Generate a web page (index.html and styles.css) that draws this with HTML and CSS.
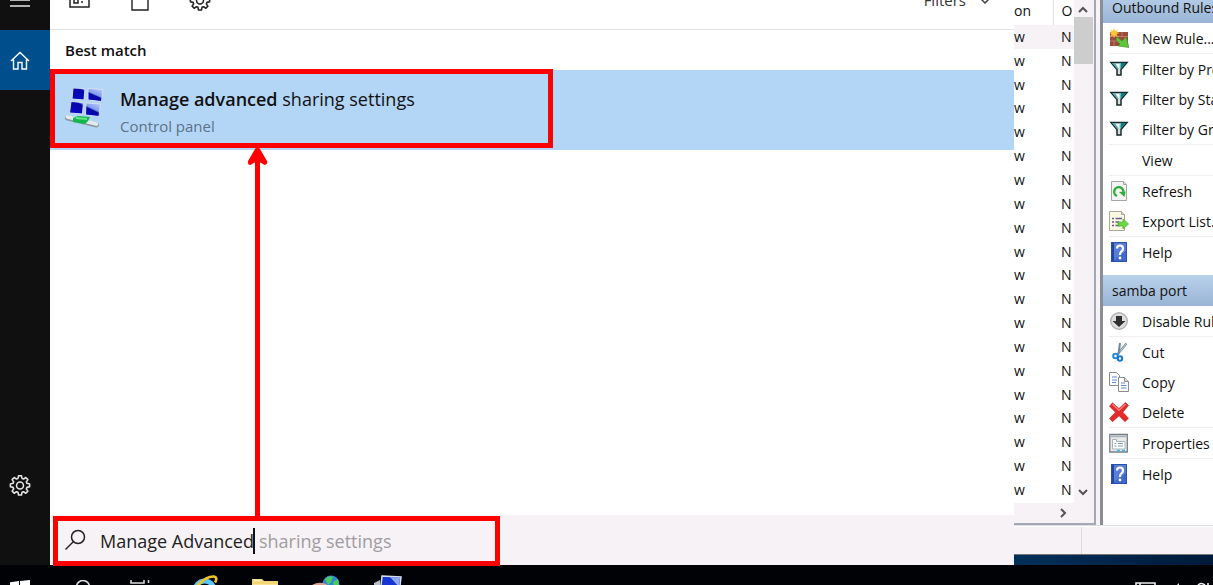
FILE: index.html
```html
<!DOCTYPE html>
<html lang="en">
<head>
<meta charset="utf-8">
<title>Search</title>
<link rel="stylesheet" href="styles.css">
</head>
<body>
<svg class="defs" aria-hidden="true">
  <defs>
    <linearGradient id="scr" x1="0" y1="1" x2="1" y2="0"><stop offset="0" stop-color="#0a0ac8"/><stop offset=".58" stop-color="#0508a8"/><stop offset=".64" stop-color="#7f9cf0"/><stop offset="1" stop-color="#c9d6fa"/></linearGradient>
    <symbol id="gear" viewBox="0 0 24 24"><path fill="none" stroke="currentColor" stroke-width="1.7" stroke-linejoin="round" d="M10.4 1.9h3.2l.6 2.9 1.6.7 2.5-1.7 2.3 2.3-1.7 2.5.7 1.6 2.9.6v3.2l-2.9.6-.7 1.6 1.7 2.5-2.3 2.3-2.5-1.7-1.6.7-.6 2.9h-3.2l-.6-2.9-1.6-.7-2.5 1.7-2.3-2.3 1.7-2.5-.7-1.6-2.9-.6v-3.2l2.9-.6.7-1.6-1.7-2.5 2.3-2.3 2.500 1.700 1.600-.7z"/><circle cx="12" cy="12.500" r="3.800" fill="none" stroke="currentColor" stroke-width="1.7"/></symbol>
    <symbol id="funnel" viewBox="0 0 20 20"><path d="M2 3.500h16l-6 7V16H8v-5.500z" fill="#d4dcdc" stroke="#16282c" stroke-width="1.500"/><path d="M12 4h5l-5.500 6V6z" fill="#008080"/><path d="M3 4h3l3.500 6H8z" fill="#4fa9ad"/><path d="M7 5h3v4z" fill="#fff"/></symbol>
    <symbol id="help" viewBox="0 0 20 20"><rect x="2" y="0" width="16" height="20" fill="#3f67cf"/><path d="M2 0h3v20H2z" fill="#2446a0"/><path d="M5 0h13v8L5 18z" fill="#6f8fe3" opacity=".55"/><path d="M2.500.5h15v19h-15z" fill="none" stroke="#2d4fae"/><path d="M8 6.500q0-3 3-3t3 3q0 1.800-1.700 3Q11 10.500 11 13" fill="none" stroke="#fff" stroke-width="2.200"/><circle cx="11" cy="16" r="1.400" fill="#fff"/></symbol>
  </defs>
</svg>

<div class="desktop">
  <nav class="rail">
    <button class="rail-btn" aria-label="Menu"><svg width="20" height="14" viewBox="0 0 20 14"><path d="M0 1h20M0 7h20M0 13h20" stroke="#e8e8e8" stroke-width="1.500"/></svg></button>
    <button class="rail-btn active" aria-label="Home"><svg width="20" height="20" viewBox="0 0 20 20"><path d="M1 11 10 2.500 19 11M3.500 9.500V19H8v-6.500h4V19h4.500V9.500" fill="none" stroke="#fff" stroke-width="1.400"/></svg></button>
    <button class="rail-btn last" aria-label="Settings"><svg width="22" height="22"><use href="#gear"/></svg></button>
  </nav>

  <main class="search">
    <header class="scopes">
      <button class="scope" aria-label="Apps"><svg width="22" height="18" viewBox="0 0 22 18"><path d="M1 1h19v15H1zM5 1v11h4V1M12 8h5M12 11h2" fill="none" stroke="#222" stroke-width="1.500"/></svg></button>
      <button class="scope" aria-label="Documents"><svg width="18" height="22" viewBox="0 0 18 22"><path d="M1 1h16v20H1z" fill="none" stroke="#222" stroke-width="1.400"/></svg></button>
      <button class="scope" aria-label="Settings"><svg width="22" height="22"><use href="#gear"/></svg></button>
      <button class="filters">Filters <svg width="14" height="8" viewBox="0 0 14 8"><path d="m1 1 6 6 6-6" fill="none" stroke="#444" stroke-width="1.500"/></svg></button>
    </header>
    <section class="results">
      <h2 class="group">Best match</h2>
      <button class="result">
        <svg width="40" height="42" viewBox="0 0 40 42">
          <g fill="url(#scr)" stroke="#d5ddf2" stroke-width="1"><path d="m8 0 12 .5-1 11.500-12-1zM23 .5l15 1-1.500 12-13.500-1.500z"/><path d="m6 13.500 12.500 1-1 11.500-13-1zM21 15l14.500 1-1.500 12.500-13.500-1.500z"/></g>
          <path d="m2.500 30 29 7" stroke="#8d9ba5" stroke-width="5" stroke-linecap="round"/><path d="m2.500 29 29 7" stroke="#e4ebee" stroke-width="3.500" stroke-linecap="round"/>
          <path d="m8 30 5-2 12 1-2 4-3 3-12-2z" fill="#12b84a"/><path d="m11 30 11 1" stroke="#69e58d" stroke-width="2"/>
        </svg>
        <span class="result-text">
          <span class="result-title"><b>Manage advanced</b> sharing settings</span>
          <span class="result-kind">Control panel</span>
        </span>
      </button>
    </section>
    <form class="query">
      <label for="q" class="query-icon" aria-label="Search"><svg width="22" height="22" viewBox="0 0 22 22"><circle cx="13" cy="8" r="6.500" fill="none" stroke="#222" stroke-width="1.500"/><path d="M8.500 12.500.5 20.500" stroke="#222" stroke-width="1.500"/></svg></label>
      <input id="q" class="query-input" type="text" value="Manage Advanced" autocomplete="off">
      <span class="query-hint">sharing settings</span>
    </form>
  </main>

  <aside class="console">
    <div class="panes">
      <div class="list-pane">
        <div class="list-row">
          <table class="rules">
            <thead><tr><th>on</th><th>O</th></tr></thead>
            <tbody>
              <tr class="hot"><td>w</td><td>N</td></tr>
              <tr><td>w</td><td>N</td></tr>
              <tr><td>w</td><td>N</td></tr>
              <tr><td>w</td><td>N</td></tr>
              <tr><td>w</td><td>N</td></tr>
              <tr><td>w</td><td>N</td></tr>
              <tr><td>w</td><td>N</td></tr>
              <tr><td>w</td><td>N</td></tr>
              <tr><td>w</td><td>N</td></tr>
              <tr><td>w</td><td>N</td></tr>
              <tr><td>w</td><td>N</td></tr>
              <tr><td>w</td><td>N</td></tr>
              <tr><td>w</td><td>N</td></tr>
              <tr><td>w</td><td>N</td></tr>
              <tr><td>w</td><td>N</td></tr>
              <tr><td>w</td><td>N</td></tr>
              <tr><td>w</td><td>N</td></tr>
              <tr><td>w</td><td>N</td></tr>
              <tr><td>w</td><td>N</td></tr>
              <tr><td>w</td><td>N</td></tr>
            </tbody>
          </table>
          <div class="vscroll">
            <button class="sb" aria-label="Scroll up"><svg width="10" height="8" viewBox="0 0 10 8"><path d="m1 6 4-4 4 4" fill="none" stroke="#555" stroke-width="2"/></svg></button>
            <div class="thumb"></div>
            <button class="sb end" aria-label="Scroll down"><svg width="10" height="8" viewBox="0 0 10 8"><path d="m1 2 4 4 4-4" fill="none" stroke="#555" stroke-width="2"/></svg></button>
          </div>
        </div>
        <div class="hscroll"><button class="sb" aria-label="Scroll right"><svg width="8" height="10" viewBox="0 0 8 10"><path d="m2 1 4 4-4 4" fill="none" stroke="#555" stroke-width="2"/></svg></button></div>
      </div>
      <div class="actions">
        <h3 class="actions-head">Outbound Rules</h3>
        <ul class="actions-list">
          <li class="sep"><button class="action"><svg width="20" height="20" viewBox="0 0 20 20"><path d="M1 4h18v14H1z" fill="#9c4a3c"/><path d="M1 8.500h18M1 13h18M6 4v4.500M13 4v4.500M9 8.500V13M16 8.500V13M5 13v5M12 13v5" stroke="#c08672" stroke-width=".8"/><path d="m8 9 5 4 4-4 3 10.500L9 18l2-2-4-4z" fill="#5fc63c" stroke="#3b8d22" stroke-width=".6"/><path d="m5 0 1 3 3-1.500L7.500 4l3 1-3 1L9 9 6 7.500 5 10 4 7.500 1 9l1.500-3L0 5l2.500-1L1 1.500 4 3z" fill="#f9c33a"/></svg>New Rule...</button></li>
          <li><button class="action"><svg width="20" height="20"><use href="#funnel"/></svg>Filter by Profile</button></li>
          <li><button class="action"><svg width="20" height="20"><use href="#funnel"/></svg>Filter by State</button></li>
          <li class="sep"><button class="action"><svg width="20" height="20"><use href="#funnel"/></svg>Filter by Group</button></li>
          <li class="sep"><button class="action"><span class="blank"></span>View</button></li>
          <li><button class="action"><svg width="20" height="20" viewBox="0 0 20 20"><path d="M2.500.5h12l3 3v16h-15z" fill="#f4f4f2" stroke="#a5a5a0"/><path d="M14.500.5v3h3" fill="#ddd" stroke="#a5a5a0"/><path d="M8 15A4.600 4.600 0 1 1 14.300 11.500" fill="none" stroke="#2fae3e" stroke-width="2.400"/><path d="m10 11 6.500-.5-1 5.500z" fill="#2fae3e"/></svg>Refresh</button></li>
          <li class="sep"><button class="action"><svg width="20" height="20" viewBox="0 0 20 20"><path d="M.5.5h12l3 3v16H.5z" fill="#fbf8e4" stroke="#aaa795"/><path d="M12.500.5v3h3" fill="#ddd" stroke="#aaa795"/><path d="M3 7.500h2M3 11h2M3 14.500h2M6.500 7.500H13M6.500 11H10M6.500 14.500H11" stroke="#665f86" stroke-width="1.300"/><path d="M9 11h5V8l5.500 5-5.500 5v-3H9z" fill="#6ad840" stroke="#4bab2c" stroke-width=".7"/></svg>Export List...</button></li>
          <li><button class="action"><svg width="20" height="20"><use href="#help"/></svg>Help</button></li>
        </ul>
        <h3 class="actions-head">samba port</h3>
        <ul class="actions-list">
          <li class="sep"><button class="action"><svg width="20" height="20" viewBox="0 0 20 20"><circle cx="10" cy="10" r="8.300" fill="#dedede" stroke="#b4b4b4" stroke-width="1.400"/><path d="M7 5h6v5h3.500L10 16 3.500 10H7z" fill="#303030"/></svg>Disable Rule</button></li>
          <li><button class="action"><svg width="20" height="20" viewBox="0 0 20 20"><path d="M11 1 9.500 12M17.500 1.500 8 13" stroke="#6f8796" stroke-width="2"/><path d="M17.500 1.500 11 9.500" stroke="#c5d3dc"/><circle cx="6.500" cy="14" r="2.300" fill="none" stroke="#238bdc" stroke-width="2"/><circle cx="11" cy="16.500" r="2.200" fill="none" stroke="#1878cc" stroke-width="2"/></svg>Cut</button></li>
          <li><button class="action"><svg width="20" height="20" viewBox="0 0 20 20"><path d="M.5.500h7l3 3v10H.5z" fill="#fff" stroke="#8c8c8c"/><path d="M3 5h5M3 8h5M3 10.500h4" stroke="#5a8bd0"/><path d="M9.500 5.500h6l4 4v10h-10z" fill="#fff" stroke="#8c8c8c"/><path d="M15.500 5.500v4h4" fill="#ddd" stroke="#8c8c8c"/><path d="M12 11h4M12 13.500h5.500M12 16h5.500" stroke="#5a8bd0"/></svg>Copy</button></li>
          <li class="sep"><button class="action"><svg width="20" height="20" viewBox="0 0 20 20"><path d="M3.500.8 10 6.500 16.500.5l3 3-5.700 6.700 5.700 6-3.500 3.500-6-6-6.500 6L.5 16.500l6-6.300-6-6z" fill="#e52a2a" stroke="#b91c1c" stroke-width=".6"/><path d="m3.500 2.200 6.500 6 6.500-6" fill="none" stroke="#f47f78" stroke-width="1.500"/></svg>Delete</button></li>
          <li class="sep"><button class="action"><svg width="20" height="20" viewBox="0 0 20 20"><path d="M.8 1.500h17.500v17.500H.8z" fill="#e9eaec" stroke="#777e85" stroke-width="1.300"/><path d="M2 3.500h15" stroke="#aab2ba" stroke-width="1.500"/><path d="M3.500 6.500h4v2h8.500V16H3.500z" fill="#fff" stroke="#a9b2ba"/><path d="M5.500 10.500h2M5.500 13h2M9 10.500h5M9 13h5" stroke="#7d9bb0"/><path d="M8 17.500h3M13 17.500h3" stroke="#2fc1e6" stroke-width="1.500"/></svg>Properties</button></li>
          <li><button class="action"><svg width="20" height="20"><use href="#help"/></svg>Help</button></li>
        </ul>
      </div>
    </div>
    <div class="status"><span class="status-cell"></span></div>
    <div class="wallpaper"></div>
  </aside>
</div>

<footer class="taskbar">
  <button class="task" aria-label="Start"><svg width="22" height="22" viewBox="0 0 22 22"><path d="M0 2.300 9 1v9.500H0zM10 .9 20 0v10.500H10zM0 11.500h9V20l-9-1.300zM10 11.500h10v10l-10-1.400z" fill="#fff"/></svg></button>
  <button class="task" aria-label="Search"><svg width="22" height="22" viewBox="0 0 22 22"><circle cx="13" cy="7" r="6.500" fill="none" stroke="#ddd" stroke-width="1.600"/><path d="m9 12-7 8" stroke="#ddd" stroke-width="1.600"/></svg></button>
  <button class="task" aria-label="Task view"><svg width="22" height="22" viewBox="0 0 22 22"><path d="M1 0v3h13V0M1 7h13v9H1zM1 22v-3h13v3M18.500 0v3M18.500 6v16" fill="none" stroke="#ddd" stroke-width="1.500"/></svg></button>
  <button class="task wide" aria-label="Internet Explorer"><svg width="30" height="30" viewBox="0 0 30 30"><path d="M23 20a9.500 9.500 0 1 1 1-6H8" fill="none" stroke="#5cc6f5" stroke-width="5"/><path d="M3 23C0 16 14 1 24 1.500q4 1 1 6" fill="none" stroke="#f2c322" stroke-width="2.600"/></svg></button>
  <button class="task wide" aria-label="File Explorer"><svg width="30" height="26" viewBox="0 0 30 26"><path d="M2 4h10l2 2h14v18H2z" fill="#f5d573"/><path d="M4 5.500h7" stroke="#fff3c4" stroke-width="1.500"/><path d="M2 9h26v15H2z" fill="#fbe294"/></svg></button>
  <button class="task wide" aria-label="Network"><svg width="30" height="30" viewBox="0 0 30 30"><circle cx="21" cy="9" r="8.500" fill="#2c86dc"/><path d="M15 4q5-4 8-2l-2 5-3 3zM23 7l5-3 1 7-4 5z" fill="#4ecb58"/><path d="M2 10q7-4 14-1l4 4v10H2z" fill="#d9a38f"/></svg></button>
  <button class="task wide" aria-label="Server"><svg width="34" height="28" viewBox="0 0 34 28"><path d="m12 1 19 1-2 18H10z" fill="#1734d4" stroke="#d7dfef" stroke-width="1.500"/><path d="m20 2 10 1-1 9z" fill="#8fa8f2"/><path d="m4 8 6-3v18H4z" fill="#b9c2cc"/></svg></button>
  <div class="tray">
    <svg width="22" height="18" viewBox="0 0 22 18"><path d="M1 1h19v12H1zM5 1v12" fill="none" stroke="#eee" stroke-width="1.600"/></svg>
    <svg width="16" height="18" viewBox="0 0 16 18"><path d="M1 6h4l5-5v16l-5-5H1z" fill="#eee"/></svg>
    <svg width="16" height="18" viewBox="0 0 16 18"><path d="M1 3q3-3 7 0M11 1v16" fill="none" stroke="#eee" stroke-width="1.600"/></svg>
  </div>
</footer>

<div class="mark mark-result"></div>
<div class="mark mark-query"></div>
<svg class="arrow" width="20" height="370" viewBox="0 0 20 370" aria-hidden="true"><path d="M9.500 2.500v367.500" stroke="#f00" stroke-width="5"/><path d="M9.500 0Q11 .5 12 2L19 14q1 3-2 4-1 0-2-1L9.500 14 4 17q-1 1-2 1-3-1-2-4L7 2Q8 .5 9.500 0z" fill="#f00"/></svg>
</body>
</html>
```
FILE: styles.css
```css
* { box-sizing: border-box; }
body {
  margin: 0;
  height: 100vh;
  display: flex;
  flex-direction: column;
  overflow: hidden;
  position: relative;
  background: #000;
  font-family: "Open Sans", "Noto Sans", sans-serif;
  color: #111;
}
button {
  margin: 0;
  padding: 0;
  border: 0;
  background: none;
  font: inherit;
  color: inherit;
  text-align: left;
}
svg { display: block; flex: none; }
h2, h3, ul { margin: 0; padding: 0; font-weight: 400; list-style: none; }
.defs { position: absolute; width: 0; height: 0; }

.desktop { flex: 1; min-height: 0; display: flex; }

/* left rail */
.rail {
  width: 50px;
  margin-top: -30px;
  display: flex;
  flex-direction: column;
  background: #101010;
  color: #e6e6e6;
}
.rail-btn { height: 60px; display: flex; align-items: center; justify-content: center; padding-right: 10px; }
.rail-btn.active { background: #004e8c; }
.rail-btn.last { margin-top: auto; margin-bottom: 50px; }

/* search flyout */
.search { flex: 1; min-width: 0; margin-top: -30px; display: flex; flex-direction: column; background: #fff; }
.scopes { height: 60px; padding: 0 22px 0 0; display: flex; align-items: center; border-bottom: 1px solid #e2e2e2; color: #222; }
.scope { width: 60px; display: flex; justify-content: center; }
.filters { margin-left: auto; display: flex; align-items: center; gap: 12px; font-size: 15px; color: #333; }
.results { flex: 1; }
.group { height: 40px; padding-left: 15px; font-size: 15px; line-height: 40px; font-weight: 600; }
.result { width: 100%; height: 80px; padding: 18px 0 0 15px; display: flex; align-items: flex-start; gap: 15px; background: #b3d6f7; }
.result-text { display: flex; flex-direction: column; }
.result-title { font-size: 18px; line-height: 22px; }
.result-title b { font-weight: 600; }
.result-kind { font-size: 15px; line-height: 32px; color: #5d7286; }
.query { height: 50px; padding: 2px 0 0 15px; display: flex; align-items: center; background: #f6f2f6; font-size: 18px; }
.query-icon { width: 35px; padding-bottom: 2px; }
.query-input {
  width: 155px;
  height: 26px;
  padding: 0;
  border: 0;
  border-right: 2px solid #111;
  background: none;
  font: inherit;
  color: #222;
  outline: 0;
}
.query-hint { padding-left: 4px; color: #a09da0; }

/* firewall console behind the flyout */
.console { width: 199px; display: flex; flex-direction: column; background: #f6f2f6; font-size: 14px; }
.panes { flex: 1; min-height: 0; display: flex; gap: 4px; border-bottom: 1px solid #dcdce2; }
.list-pane { width: 82px; display: flex; flex-direction: column; border-right: 2px solid #a3a8b4; border-bottom: 2px solid #a3a8b4; }
.list-row { flex: 1; display: flex; background: #fff; }
.rules { width: 60px; height: 502px; border-collapse: collapse; table-layout: fixed; line-height: 18px; }
.rules th, .rules td { padding: 0; font-weight: 400; text-align: left; }
.rules th { height: 25px; padding-bottom: 4px; }
.rules th:first-child { width: 39px; border-right: 1px solid #e2e2e6; }
.rules th + th, .rules td + td { padding-left: 8px; }
.rules .hot { background: #f6f2f6; }
.vscroll { width: 20px; display: flex; flex-direction: column; background: #f6f2f6; }
.sb { height: 17px; padding: 2px 0 0 4px; }
.sb.end { margin-top: auto; margin-bottom: 4px; }
.thumb { height: 47px; margin-right: 1px; background: #cdcdcd; }
.hscroll { height: 20px; padding: 0 0 0 41px; }

.actions { flex: 1; min-width: 0; overflow: hidden; border-left: 3px solid #8b8d94; background: #fff; }
.actions-head { height: 31px; padding-left: 9px; font-size: 14px; line-height: 31px; white-space: nowrap; background: linear-gradient(#b9d1ea, #99b4d6); }
.actions-head:first-child { margin-top: -8px; }
.actions-list { padding-left: 6px; }
.actions-list + .actions-head { margin-top: 8px; }
.actions-list li.sep { border-bottom: 1px solid #f0eef0; }
.action { width: 100%; height: 30px; display: flex; align-items: center; gap: 13px; white-space: nowrap; }
.blank { width: 20px; }
.status { height: 29px; display: flex; border-top: 1px solid #fff; border-bottom: 1px solid #777; }
.status-cell { width: 68px; border-right: 1px solid #dadadf; }
.wallpaper { height: 10px; background: linear-gradient(90deg, #00305a, #001a3a); }

/* taskbar */
.taskbar { height: 20px; display: flex; align-items: flex-start; overflow: hidden; background: #000206; }
.task { width: 60px; padding: 15px 0 0 10px; }
.task.wide { padding: 10px 0 0 10px; }
.tray { margin-left: auto; padding-top: 17px; display: flex; gap: 12px; }

/* annotations */
.mark { position: absolute; border: 5px solid #f00; }
.mark-result { left: 50px; top: 69px; width: 503px; height: 79px; }
.mark-query { left: 53px; top: 516px; width: 447px; height: 50px; }
.arrow { position: absolute; left: 248px; top: 147px; }
```
